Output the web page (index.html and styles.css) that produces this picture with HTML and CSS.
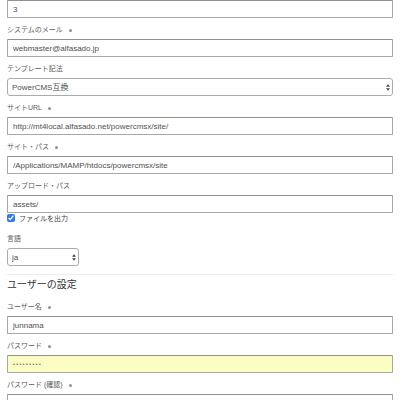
FILE: index.html
```html
<!DOCTYPE html>
<html lang="ja">
<head>
<meta charset="utf-8">
<link rel="stylesheet" href="styles.css">
</head>
<body>
<div class="form">
  <div class="group">
    <input class="ctl" type="text" value="3">
  </div>
  <div class="group">
    <label class="lbl">システムのメール<span class="req"></span></label>
    <input class="ctl" type="text" value="webmaster@alfasado.jp">
  </div>
  <div class="group">
    <label class="lbl">テンプレート記法</label>
    <div class="sel-wrap">
      <select class="ctl sel"><option>PowerCMS互換</option></select>
      <svg class="arrows" width="4" height="7" viewBox="0 0 4 7"><polygon points="0,2.8 2,0.3 4,2.8" /><polygon points="0,4.2 2,6.7 4,4.2" /></svg>
    </div>
  </div>
  <div class="group">
    <label class="lbl">サイトURL<span class="req"></span></label>
    <input class="ctl" type="text" value="http://mt4local.alfasado.net/powercmsx/site/">
  </div>
  <div class="group">
    <label class="lbl">サイト・パス<span class="req"></span></label>
    <input class="ctl" type="text" value="/Applications/MAMP/htdocs/powercmsx/site">
  </div>
  <div class="group group-check">
    <label class="lbl">アップロード・パス</label>
    <input class="ctl" type="text" value="assets/">
    <label class="check"><input type="checkbox" checked>ファイルを出力</label>
  </div>
  <div class="group">
    <label class="lbl">言語</label>
    <div class="sel-wrap narrow">
      <select class="ctl sel"><option>ja</option></select>
      <svg class="arrows" width="4" height="7" viewBox="0 0 4 7"><polygon points="0,2.8 2,0.3 4,2.8" /><polygon points="0,4.2 2,6.7 4,4.2" /></svg>
    </div>
  </div>
  <hr class="sep">
  <h2 class="heading">ユーザーの設定</h2>
  <div class="group">
    <label class="lbl">ユーザー名<span class="req"></span></label>
    <input class="ctl" type="text" value="junnama">
  </div>
  <div class="group">
    <label class="lbl">パスワード<span class="req"></span></label>
    <input class="ctl pw" type="password" value="password1">
  </div>
  <div class="group">
    <label class="lbl">パスワード (確認)<span class="req"></span></label>
    <input class="ctl" type="password" value="">
  </div>
</div>
</body>
</html>
```
FILE: styles.css
```css
html, body {
  margin: 0;
  padding: 0;
  background: #ffffff;
}
body {
  font-family: "Liberation Sans", "Noto Sans CJK JP", sans-serif;
  color: #444444;
}
.form {
  display: flex;
  flex-direction: column;
  padding: 0 7px;
}
.group {
  display: flex;
  flex-direction: column;
  margin-bottom: 7px;
}
.group-check {
  margin-bottom: 11px;
}
.lbl {
  display: flex;
  align-items: center;
  height: 10px;
  line-height: 10px;
  font-size: 7px;
  color: #5a5a5a;
  margin-bottom: 4px;
}
.req {
  display: inline-block;
  width: 3px;
  height: 3px;
  border-radius: 50%;
  background: #909090;
  margin-left: 6px;
}
.ctl {
  box-sizing: border-box;
  height: 18px;
  width: 100%;
  margin: 0;
  padding: 0 4px 0 5px;
  font-family: "Liberation Sans", "Noto Sans CJK JP", sans-serif;
  font-size: 8px;
  color: #505050;
  background: #ffffff;
  border: 1px solid #a8a8a8;
  border-top-color: #919191;
  border-radius: 1px;
  outline: none;
}
.pw {
  background: #fbfdc2;
  font-size: 5px;
  letter-spacing: 1.5px;
  color: #606060;
}
.sel-wrap {
  position: relative;
  display: flex;
}
.sel-wrap.narrow {
  width: 72px;
}
.sel {
  appearance: none;
  -webkit-appearance: none;
  border: 1px solid #ababab;
  border-radius: 3px;
  padding: 0 10px 0 4px;
}
.arrows {
  position: absolute;
  right: 3px;
  top: 5.5px;
  fill: #444444;
}
.check {
  display: flex;
  align-items: center;
  height: 10px;
  font-size: 7px;
  color: #444444;
}
.check input {
  width: 8px;
  height: 8px;
  margin: 0 4px 0 0;
  accent-color: #2f7bea;
}
.sep {
  margin: 1px 0 0;
  border: 0;
  border-top: 1px solid #ededed;
  height: 0;
}
.heading {
  margin: 4px 0 11px;
  font-size: 10px;
  line-height: 12px;
  font-weight: normal;
  color: #333333;
}
```
